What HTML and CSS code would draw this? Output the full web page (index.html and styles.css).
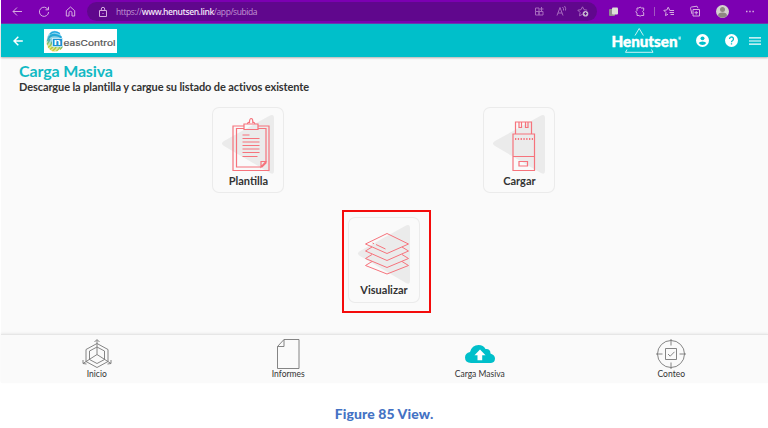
FILE: index.html
```html
<!DOCTYPE html>
<html lang="es">
<head>
<meta charset="utf-8">
<title>Carga Masiva</title>
<link rel="stylesheet" href="styles.css">
</head>
<body>
<div class="window">
  <div class="browser">
    <svg class="nav" width="86" height="23" viewBox="1 0 86 23">
      <path d="M22 11.5H13M17 7.5l-4 4 4 4"/>
      <path d="M48 9.5A4.6 4.6 0 1 0 48.6 12M48.5 6.8v3h-3"/>
      <path d="M66.3 10.7l4.2-3.7 4.2 3.7v5.3h-2.7v-3.2a1.5 1.5 0 0 0-3 0v3.2h-2.7z"/>
    </svg>
    <div class="address">
      <svg class="lock" width="10" height="12" viewBox="0 0 10 12"><path d="M1.5 4.5h7v6h-7zM3.3 4.5V3a1.7 1.7 0 0 1 3.4 0v1.5M5 7v1"/></svg>
      <span class="url">https://<b>www.henutsen.link</b>/app/subida</span>
      <svg class="tools" width="62" height="17" viewBox="535 3 62 17">
        <path d="M535.5 8h3.5v3.5h-3.5zM535.5 11.500h3.500v3.500h-3.500zM539 11.500h4v3.500h-4zM541.500 7v4M539.700 9h3.800"/>
        <path d="M557 15.500l3-8 3 8M558 13h4M562.500 7q1.500 1.500 1 3.500M564.500 6q1.800 2.300 1 4.500"/>
        <path d="M584 15l-1.500-.7-3 1.500.6-3.300-2.300-2.300 3.200-.5 1.500-2.900 1.500 2.900 3.200.5"/>
        <circle class="plus" cx="585.500" cy="13.700" r="2.800"/><path class="sign" d="M584 13.700h3M585.500 12.200v3"/>
      </svg>
    </div>
    <svg class="extras" width="170" height="23" viewBox="598 0 170 23">
      <rect x="609" y="9" width="6" height="7" rx="1" fill="#8f8f8f" stroke="none"/><rect x="612" y="7.500" width="6" height="7" rx="1" fill="#dde0d8" stroke="none"/>
      <path d="M637 8h2q1-2.200 2.200 0h2.500v2.200q-2.200 1.300 0 2.700V15.500h-2.500q-1.200 1.500-2.200 0h-2v-2.300q-2.500-1.400 0-2.700z"/>
      <path class="rule" d="M654.500 7v9"/>
      <path d="M668 14.200l-2.500 1.400.5-3-2.200-2.200 3-.4 1.400-2.800 1.400 2.800M669.500 10.500h4.500M669.500 12.500h4.500M670.500 14.500h3.500"/>
      <path d="M693 9.500h6.500v6.500H693zM696.200 11v3.500M694.500 12.700h3.500M692 14l-1.500-5.700q0-1 1-1.300l5.500-.8 1 2"/>
      <circle cx="722.500" cy="11.500" r="6.500" fill="#d5d1cf" stroke="none"/><circle cx="722.500" cy="9.500" r="2.500" fill="#8e8782" stroke="none"/><path d="M718 15.500q0-3 4.500-3t4.500 3q-1.500 2.300-4.500 2.300t-4.500-2.300" fill="#8e8782" stroke="none"/>
      <path d="M746 11.500h1.500M749.200 11.500h1.500M752.400 11.500h1.500" stroke-width="1.500"/>
    </svg>
  </div>

  <header class="appbar">
    <svg class="back" width="10" height="10" viewBox="0 0 10 10"><path d="M9.800 5H1M5.300.7L1 5l4.300 4.300"/></svg>
    <svg class="client" width="73" height="24" viewBox="0 0 73 24">
      <defs><linearGradient id="print" gradientUnits="userSpaceOnUse" x1="14" y1="2" x2="7" y2="23"><stop offset="0" stop-color="#13a5e8"/><stop offset=".5" stop-color="#35aac0"/><stop offset=".75" stop-color="#a5c83c"/><stop offset="1" stop-color="#efc51c"/></linearGradient></defs>
      <rect width="73" height="24" fill="#fff"/>
      <ellipse cx="10.500" cy="12.300" rx="8" ry="10.500" fill="url(#print)" opacity=".5"/>
      <g fill="none" stroke="url(#print)" stroke-width="1.300">
        <path d="M6 5Q10 1 16 4.500M4.500 8.500Q9 2.500 17.500 8M3.500 12Q5 6.500 10.500 6.500T18 10M3 15.500Q5 13 6 10M4 18.500q3.500-2 4-6M6 20.500q3-2 3.500-4M8.500 22q3-2 4-5M12.500 22q3-2 3.500-5M16 20.500q2-1.500 2.500-4"/>
      </g>
      <rect x="8.500" y="9.500" width="10" height="8" fill="#1b91d2" stroke="#d8f1fa" stroke-width=".8"/>
      <text x="9.800" y="16" class="client-n" textLength="7" lengthAdjust="spacingAndGlyphs">n</text>
      <text x="19.500" y="17.300" class="client-name" textLength="52" lengthAdjust="spacingAndGlyphs">easControl</text>
    </svg>
    <svg class="brand" width="70" height="28" viewBox="0 0 70 28">
      <path d="M24 8.500l4.200-7 4.200 7M16 22.500l-1.500 2.800h27.500l-1.500-2.800"/>
      <text x="0.500" y="19.500" textLength="66" lengthAdjust="spacingAndGlyphs">Henutsen</text><text x="67" y="13" class="reg">®</text>
    </svg>
    <svg class="user" width="13" height="13" viewBox="0 0 12 12"><circle cx="6" cy="6" r="6" fill="#fff"/><circle cx="6" cy="4" r="1.800" fill="#00bfca"/><path d="M2.500 8.300q.8-1.400 3.500-1.400t3.500 1.400Q8.300 10.200 6 10.200T2.500 8.300" fill="#00bfca"/></svg>
    <svg class="help" width="13" height="13" viewBox="0 0 12 12"><circle cx="6" cy="6" r="6" fill="#fff"/><path d="M4.200 4.600a1.800 1.800 0 1 1 2.900 1.400Q6 6.700 6 7.600M6 8.600v1.200" fill="none" stroke="#00bfca" stroke-width="1.200"/></svg>
    <svg class="menu" width="12" height="8" viewBox="0 0 12 8"><path d="M0 .8h12M0 4h12M0 7.200h12" stroke="#fff" stroke-width="1.200"/></svg>
  </header>

  <main class="content">
    <h1>Carga Masiva</h1>
    <p class="lead">Descargue la plantilla y cargue su listado de activos existente</p>
    <div class="row">
      <div class="card">
        <svg width="72" height="67" viewBox="0 0 72 67">
          <path class="tri" d="M12 34L58 8.500Q62 7 62 11v53q0 4-4 2L12 39q-4-2.500 0-5"/>
          <path d="M32 19H21v44.500h36V19H46M32 21.500h-7.500V60H50l4-4V21.500h-8M49 60v-5.500h5z"/>
          <path d="M32 17h14v5.500H32zM35.500 17q0-2 2-1.500 0-4 1.700-4t1.600 4q2-.5 2 1.500"/>
          <path d="M30.500 28h7M30.500 31.500h17M30.500 35h17M30.500 38.500h17M30.500 42h17M30.500 45.500h17M30.500 49.500h15"/>
        </svg>
        <span>Plantilla</span>
      </div>
      <div class="card">
        <svg width="72" height="67" viewBox="0 0 72 67">
          <path class="tri" d="M12 34L58 8.500Q62 7 62 11v53q0 4-4 2L12 39q-4-2.500 0-5"/>
          <path d="M32.500 27V15h16v12M30 27h21.500v36.500H30zM30 49.500h21.500M36 54.500h8.500v4.500H36zM36 15v5.500h2.500V15M42.500 15v5.500H45V15"/>
          <path d="M32 32h18" stroke-dasharray="1.300 1.500" stroke-width="2"/>
        </svg>
        <span>Cargar</span>
      </div>
    </div>
    <div class="highlight">
      <div class="card">
        <svg width="72" height="67" viewBox="0 0 72 67">
          <path class="tri" d="M12 34L58 8.500Q62 7 62 11v53q0 4-4 2L12 39q-4-2.500 0-5"/>
          <g class="thin"><path d="M17.500 27L39 16.500 60.500 27 39 36.500z"/><path d="M24 30l-6.500 4L39 43.500 60.500 34 54 30M24 37.500l-6.500 4L39 50.500l21.500-9L54 37.500M24 44.500l-6.500 4L39 57l21.500-8.500-6.500-4"/><path d="M24.500 26l1.500.7M28 27.500l9.500 4.500"/></g>
        </svg>
        <span>Visualizar</span>
      </div>
    </div>
  </main>

  <nav class="bottom">
    <a><svg width="32" height="32" viewBox="0 0 32 32"><path d="M16 2v14.500M16 16.500L2 25.500M16 16.500L30 25.500M16 5.500l11 6v12l-11 6-11-6v-12zM16 9l7.500 4v8.500L16 25.500l-7.500-4V13zM13.500 4L16 1.500l2.500 2.500M2 22v3.500l3.500.5M30 22v3.500l-3.500.5"/></svg><span>Inicio</span></a>
    <a><svg width="32" height="32" viewBox="0 0 32 32"><path d="M5.500 8.500L12 1.500h15v29H5.500zM5.500 8.500H12v-7"/></svg><span>Informes</span></a>
    <a><svg width="32" height="32" viewBox="0 0 32 32"><path class="cloud" d="M7 25Q1 24.500 1 19.500 1 15 6 14 8 7 14.500 7q5 0 7 4 5-.5 5 4.500Q31 17 31 20.500q0 4-4 4.500z"/><path class="arrow" d="M16 11.500l5.500 5.800h-3.300v4.900h-4.700v-4.900h-3z"/></svg><span>Carga Masiva</span></a>
    <a><svg width="32" height="32" viewBox="0 0 32 32"><circle cx="16" cy="16" r="13.500"/><path d="M16 1v6.500M16 24.500V31M1 16h6.500M24.500 16H31M10.500 10.500h11v11h-11zM13 16l2.200 2.200 4.300-4.400"/></svg><span>Conteo</span></a>
  </nav>
</div>
<p class="caption">Figure 85 View.</p>
</body>
</html>
```
FILE: styles.css
```css
* { box-sizing: border-box; }
body {
  margin: 0;
  width: 768px;
  height: 428px;
  overflow: hidden;
  background: #fff;
  font-family: Lato, "Open Sans", sans-serif;
  color: #333;
}
svg { display: block; flex: none; }
.window {
  margin-left: 1px;
  height: 383px;
  display: flex;
  flex-direction: column;
  background: #fafafa;
}
.browser {
  height: 24px;
  flex: none;
  display: flex;
  background: #7c00b2;
  border-bottom: 1px solid #6f3aae;
}
.nav, .lock, .tools, .extras { fill: none; stroke: #d5addf; stroke-width: 1; }
.address {
  width: 510px;
  height: 19px;
  margin-top: 2px;
  padding-left: 11px;
  border-radius: 10px;
  background: #60078d;
  display: flex;
  align-items: center;
}
.tools { margin-left: auto; stroke: #a66bbd; }
.tools .plus { fill: #c6b8cf; stroke: none; }
.tools .sign { stroke: #60078d; }
.extras { margin-left: 1px; }
.rule { stroke: #a259c1; }
.url {
  margin-left: 8px;
  font: 8.5px "Open Sans", sans-serif;
  letter-spacing: -.42px;
  color: #c196d2;
}
.url b { font-weight: 600; color: #f2e5f7; }

.appbar {
  height: 33px;
  flex: none;
  display: flex;
  align-items: center;
  padding: 0 7px 0 12px;
  background: #00bfca;
  box-shadow: 0 1px 2px rgba(0, 0, 0, .3);
}
.back, .brand path { fill: none; stroke: #fff; }
.back { stroke-width: 1.5; }
.brand path { stroke-width: .8; }
.client { margin-left: 21px; }
.client-n { font: bold 9px Inter, sans-serif; fill: #fff; }
.client-name { font: 7.5px Inter, sans-serif; fill: #555; stroke: #555; stroke-width: .2; }
.brand { margin-left: auto; }
.brand text { font: 900 15px Lato, sans-serif; fill: #fff; stroke: #fff; stroke-width: .4; }
.brand .reg { font-size: 4px; stroke: none; }
.user { margin-left: 15px; }
.help { margin-left: 16px; }
.menu { margin-left: 11px; }

.content { flex: 1; display: flex; flex-direction: column; }
h1 {
  margin: 5px 0 0 18px;
  font-size: 16px;
  line-height: 18px;
  font-weight: 700;
  letter-spacing: -.15px;
  color: #12b9c4;
}
.lead {
  margin: 0 0 0 18px;
  font-size: 11px;
  line-height: 13px;
  font-weight: 700;
  letter-spacing: -.1px;
}
.row {
  display: flex;
  gap: 199px;
  margin: 14px 0 0 211.4px;
}
.card {
  width: 72px;
  height: 86px;
  border-radius: 7px;
  box-shadow: inset 0 0 0 1px #ebebeb;
  display: flex;
  flex-direction: column;
  align-items: center;
  font-size: 11px;
  line-height: 13px;
  font-weight: 700;
}
.card svg { fill: none; stroke: #f6737c; stroke-width: 1.2; }
.card .tri { fill: #ebebeb; stroke: none; }
.card .thin { stroke-width: 1; }
.highlight {
  width: 89px;
  height: 103px;
  margin: 17px 0 0 341px;
  padding: 5px 0 0 4px;
  border: 2px solid #f40b0b;
}
.highlight .card span { margin-top: -1px; }
.bottom {
  height: 49px;
  flex: none;
  display: grid;
  grid-template-columns: repeat(4, 191.5px);
  border-top: 1px solid #e6e6e6;
  box-shadow: 0 -1px 2px rgba(0, 0, 0, .06);
}
.bottom a {
  padding-top: 3px;
  display: flex;
  flex-direction: column;
  align-items: center;
  font-size: 8.5px;
  line-height: 9px;
}
.bottom svg { fill: none; stroke: #777; stroke-width: .9; }
.bottom .cloud { fill: #00bfca; stroke: none; }
.bottom .arrow { fill: #fff; stroke: none; }
.caption {
  margin: 22px 0 0;
  text-align: center;
  font: 900 14px/18px Lato, sans-serif;
  letter-spacing: .1px;
  color: #4472c4;
}
```
